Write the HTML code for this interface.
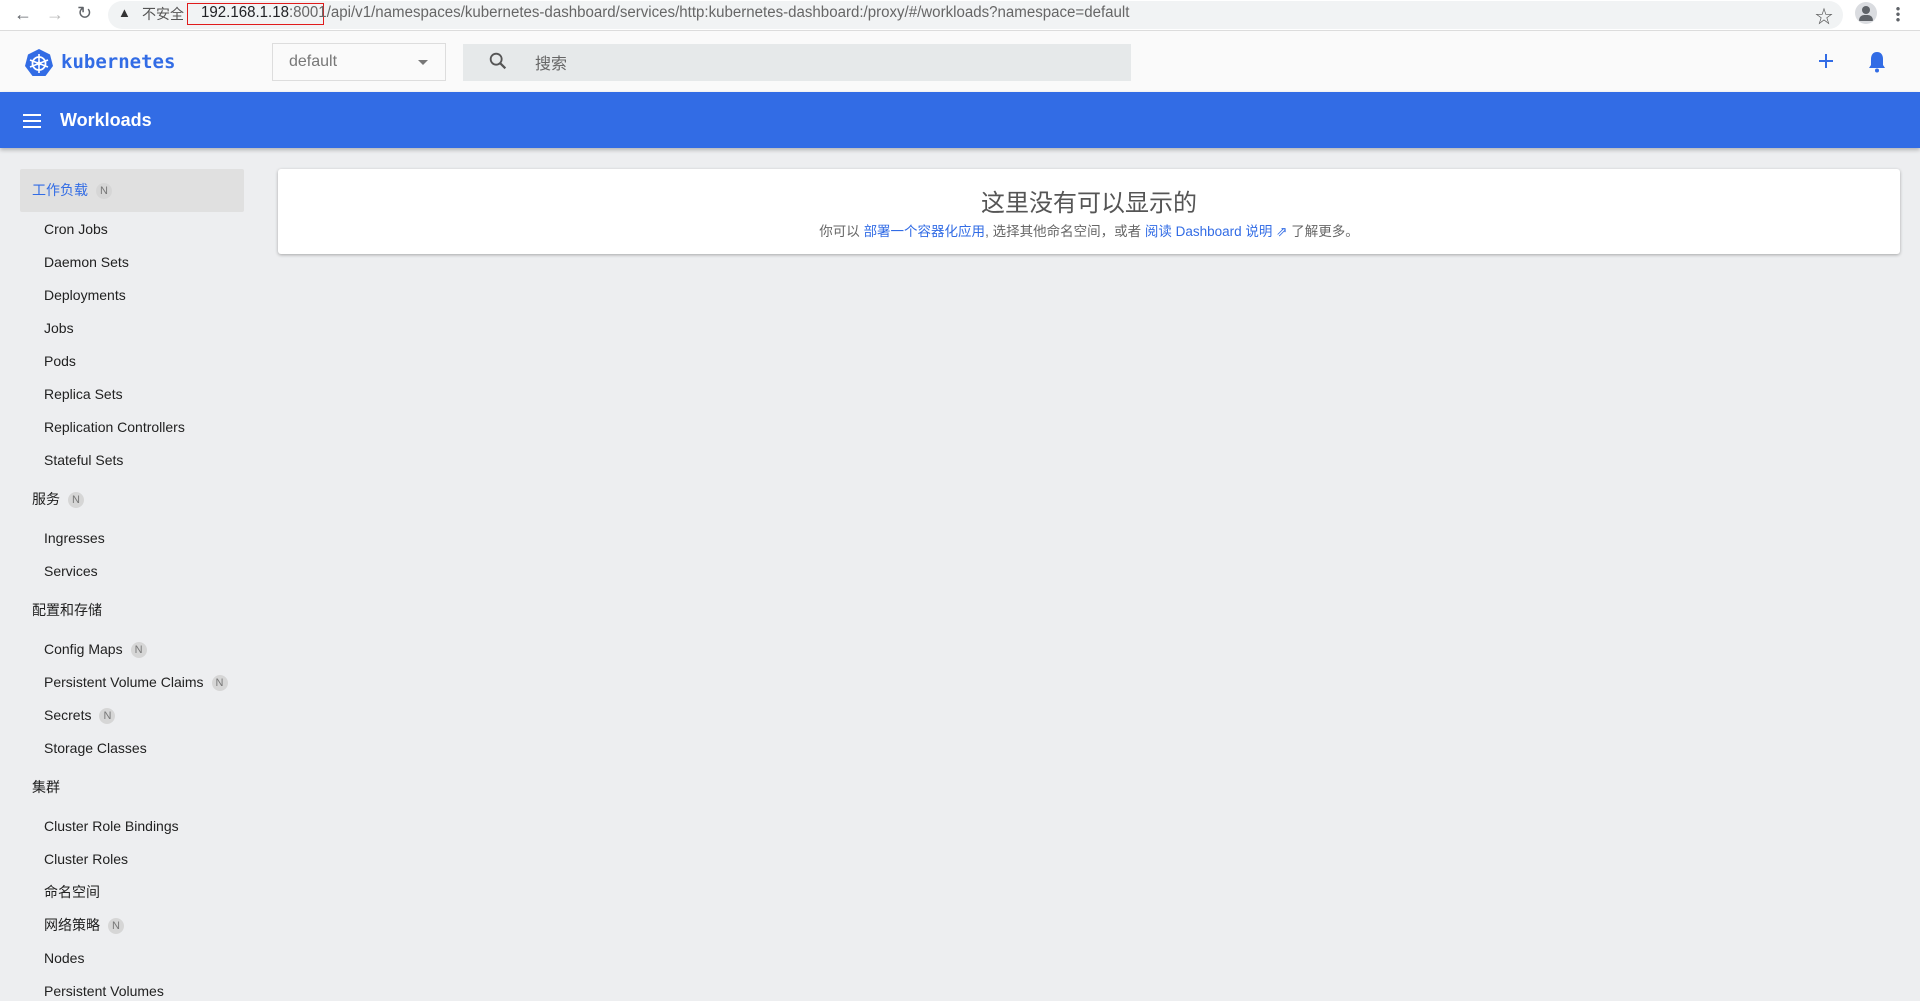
<!DOCTYPE html>
<html><head><meta charset="utf-8"><style>
*{margin:0;padding:0;box-sizing:border-box}
body{width:1920px;height:998px;overflow:hidden;background:#edeef0;font-family:"Liberation Sans","Noto Sans CJK SC",sans-serif;position:relative;color:#212121}
.a{position:absolute;white-space:nowrap}
.chrome{top:0;left:0;width:1920px;height:31px;background:#fff;border-bottom:1px solid #dcdcdc}
.omni{top:1px;left:108px;width:1735px;height:28px;background:#f1f3f4;border-radius:14px}
.top{top:31px;left:0;width:1920px;height:61px;background:#fafafa}
.blue{top:92px;left:0;width:1920px;height:56px;background:#326ce5;box-shadow:0 2px 4px rgba(0,0,0,.25)}
.it{left:44px;font-size:14px;line-height:20px;color:#212121}
.sec{left:32px;font-size:14px;line-height:20px;color:#212121}
.n{display:inline-block;width:16px;height:16px;border-radius:8px;background:#d6d6d6;color:#777;font-size:11px;line-height:16px;text-align:center;margin-left:8px;vertical-align:1px}
.lk{color:#326ce5}
</style></head><body>
<div class="a chrome"></div>
<div class="a omni"></div>
<div class="a" style="left:14px;top:4px;font-size:18px;color:#5f6368">&#8592;</div>
<div class="a" style="left:46px;top:4px;font-size:18px;color:#bbb">&#8594;</div>
<div class="a" style="left:77px;top:3px;font-size:18px;color:#5f6368">&#8635;</div>
<div class="a" style="left:118px;top:5px;font-size:13px;color:#333">&#9650;</div>
<div class="a" style="left:142px;top:4px;font-size:14px;color:#555">不安全</div>
<div class="a" style="left:187px;top:3px;width:137px;height:22px;border:1.5px solid #e01b1b"></div>
<div class="a" style="left:201px;top:4px;font-size:15.5px;color:#202124;transform:scaleX(0.972);transform-origin:0 0">192.168.1.18<span style="color:#666">:8001</span><span style="color:#666">/api/v1/namespaces/kubernetes-dashboard/services/http:kubernetes-dashboard:/proxy/#/workloads?namespace=default</span></div>
<div class="a" style="left:1815px;top:3px;font-size:18px;color:#555">&#9734;</div>
<div class="a" style="left:1855px;top:2px;width:22px;height:22px;border-radius:11px;background:#dadce0"></div>
<div class="a" style="left:1862px;top:6px;width:8px;height:8px;border-radius:4px;background:#5f6368"></div>
<div class="a" style="left:1859px;top:15px;width:14px;height:6px;border-radius:6px 6px 1px 1px;background:#5f6368"></div>
<div class="a" style="left:1896px;top:6px;width:4px;height:16px;background:radial-gradient(circle,#5f6368 1.5px,transparent 2px) 0 0/4px 5.5px"></div>
<div class="a top"></div>
<svg class="a" style="left:24px;top:48px" width="30" height="30" viewBox="0 0 30 30"><polygon points="15,1 26,6.5 29,18 21.5,28 8.5,28 1,18 4,6.5" fill="#326ce5"/><circle cx="15" cy="15.5" r="6.5" fill="none" stroke="#fff" stroke-width="1.8"/><g stroke="#fff" stroke-width="1.6"><line x1="15" y1="6" x2="15" y2="25"/><line x1="6" y1="12" x2="24" y2="19"/><line x1="24" y1="12" x2="6" y2="19"/></g><circle cx="15" cy="15.5" r="2" fill="#fff"/></svg>
<div class="a" style="left:61px;top:51px;font-family:'DejaVu Sans Mono',monospace;font-weight:bold;font-size:19px;color:#326ce5">kubernetes</div>
<div class="a" style="left:272px;top:43px;width:174px;height:38px;border:1px solid #ddd;background:#fafafa"></div>
<div class="a" style="left:289px;top:53px;font-size:16px;color:#777">default</div>
<div class="a" style="left:418px;top:60px;width:0;height:0;border-left:5px solid transparent;border-right:5px solid transparent;border-top:5px solid #777"></div>
<div class="a" style="left:463px;top:44px;width:668px;height:37px;background:#e6e9ea"></div>
<svg class="a" style="left:487px;top:50px" width="22" height="22" viewBox="0 0 24 24"><circle cx="10" cy="10" r="6" fill="none" stroke="#555" stroke-width="2"/><line x1="14.5" y1="14.5" x2="20" y2="20" stroke="#555" stroke-width="2.4"/></svg>
<div class="a" style="left:535px;top:50px;font-size:16px;color:#666">搜索</div>
<svg class="a" style="left:1817px;top:52px" width="18" height="18"><path d="M9 2v14M2 9h14" stroke="#326ce5" stroke-width="2"/></svg>
<svg class="a" style="left:1867px;top:50px" width="20" height="24" viewBox="0 0 20 24"><path d="M10 2c-4 0-6 3-6 7v6l-2 3h16l-2-3V9c0-4-2-7-6-7z" fill="#326ce5"/><circle cx="10" cy="20.5" r="2" fill="#326ce5"/></svg>
<div class="a blue"></div>
<svg class="a" style="left:23px;top:114px" width="18" height="14"><path d="M0 1h18M0 7h18M0 13h18" stroke="#fff" stroke-width="2"/></svg>
<div class="a" style="left:60px;top:110px;font-size:18px;font-weight:bold;color:#fff">Workloads</div>
<div class="a" style="left:20px;top:169px;width:224px;height:43px;background:#e0e0e0;border-radius:2px"></div>
<div class="a sec" style="top:180px;color:#326ce5">工作负载<span class="n">N</span></div>
<div class="a it" style="top:219px">Cron Jobs</div>
<div class="a it" style="top:252px">Daemon Sets</div>
<div class="a it" style="top:285px">Deployments</div>
<div class="a it" style="top:318px">Jobs</div>
<div class="a it" style="top:351px">Pods</div>
<div class="a it" style="top:384px">Replica Sets</div>
<div class="a it" style="top:417px">Replication Controllers</div>
<div class="a it" style="top:450px">Stateful Sets</div>
<div class="a sec" style="top:489px">服务<span class="n">N</span></div>
<div class="a it" style="top:528px">Ingresses</div>
<div class="a it" style="top:561px">Services</div>
<div class="a sec" style="top:600px">配置和存储</div>
<div class="a it" style="top:639px">Config Maps<span class="n">N</span></div>
<div class="a it" style="top:672px">Persistent Volume Claims<span class="n">N</span></div>
<div class="a it" style="top:705px">Secrets<span class="n">N</span></div>
<div class="a it" style="top:738px">Storage Classes</div>
<div class="a sec" style="top:777px">集群</div>
<div class="a it" style="top:816px">Cluster Role Bindings</div>
<div class="a it" style="top:849px">Cluster Roles</div>
<div class="a it" style="top:882px">命名空间</div>
<div class="a it" style="top:915px">网络策略<span class="n">N</span></div>
<div class="a it" style="top:948px">Nodes</div>
<div class="a it" style="top:981px">Persistent Volumes</div>
<div class="a" style="left:278px;top:169px;width:1622px;height:85px;background:#fff;border-radius:3px;box-shadow:0 1px 3px rgba(0,0,0,.3)"></div>
<div class="a" style="left:278px;top:183px;width:1622px;text-align:center;font-size:24px;color:#555">这里没有可以显示的</div>
<div class="a" style="left:278px;top:220px;width:1622px;text-align:center;font-size:13.5px;color:#666">你可以 <span class="lk">部署一个容器化应用</span>, 选择其他命名空间，或者 <span class="lk">阅读 Dashboard 说明 &#8663;</span> 了解更多。</div>
</body></html>
